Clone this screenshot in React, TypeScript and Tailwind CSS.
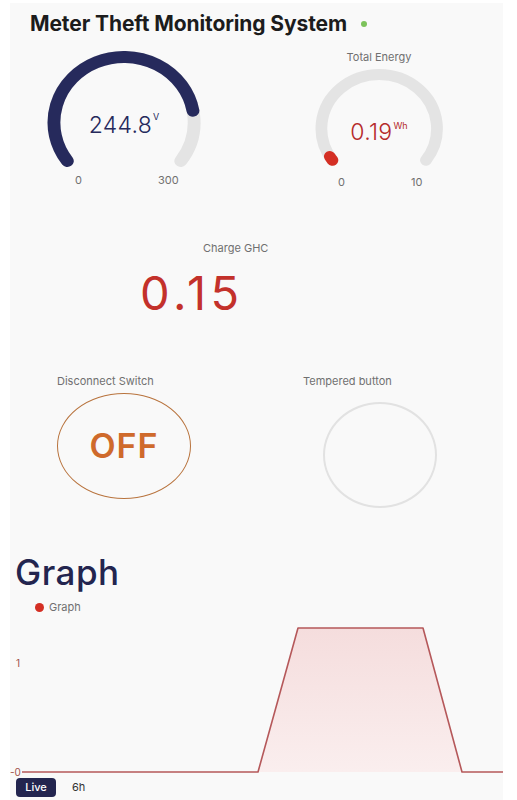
import React from "react";

// the reference is a phone capture that got widened a bit, so gauge drawings are stretched too
const STRETCH = 1.07;

function polar(cx: number, cy: number, r: number, deg: number) {
  const a = (deg * Math.PI) / 180;
  return [cx + r * Math.cos(a), cy - r * Math.sin(a)];
}

function arcPath(cx: number, cy: number, r: number, from: number, to: number) {
  const [x1, y1] = polar(cx, cy, r, from);
  const [x2, y2] = polar(cx, cy, r, to);
  const large = from - to > 180 ? 1 : 0;
  return `M ${x1.toFixed(2)} ${y1.toFixed(2)} A ${r} ${r} 0 ${large} 1 ${x2.toFixed(2)} ${y2.toFixed(2)}`;
}

const START = 216;
const SWEEP = 252;

type GaugeArcProps = {
  vbW: number;
  vbH: number;
  cx: number;
  cy: number;
  r: number;
  stroke: number;
  color: string;
  fraction: number;
};

function GaugeArc({ vbW, vbH, cx, cy, r, stroke, color, fraction }: GaugeArcProps) {
  const end = START - SWEEP * fraction;
  return (
    <svg
      width={vbW * STRETCH}
      height={vbH}
      viewBox={`0 0 ${vbW} ${vbH}`}
      preserveAspectRatio="none"
      className="block"
    >
      <path
        d={arcPath(cx, cy, r, START, START - SWEEP)}
        fill="none"
        stroke="#e4e4e4"
        strokeWidth={stroke}
        strokeLinecap="round"
      />
      <path
        d={arcPath(cx, cy, r, START, end)}
        fill="none"
        stroke={color}
        strokeWidth={stroke}
        strokeLinecap="round"
      />
    </svg>
  );
}

function VoltageGauge() {
  return (
    <div className="relative w-[154px] h-[140px] mt-[15px]">
      <GaugeArc vbW={144} vbH={124} cx={72} cy={71.5} r={65.5} stroke={12} color="#262a5c" fraction={244.8 / 300} />
      <div className="absolute left-0 right-0 top-[61px] flex justify-center text-[#262a5c]">
        <span className="text-[23px] leading-[26px] font-light tracking-[0.3px]">244.8</span>
        <span className="text-[9px] leading-[10px] ml-[1px]">V</span>
      </div>
      <span className="absolute top-[122px] left-[28px] text-[11px] leading-[14px] text-[#707070]">0</span>
      <span className="absolute top-[122px] left-[111px] text-[11px] leading-[14px] text-[#707070]">300</span>
    </div>
  );
}

function EnergyGauge() {
  return (
    <div className="flex flex-col items-center w-[128px] ml-[114px] mt-[14px]">
      <p className="text-[11px] leading-[14px] text-[#707070]">Total Energy</p>
      <div className="relative w-[128px] h-[130px] mt-[5px]">
        <GaugeArc vbW={120} vbH={110} cx={60} cy={59.5} r={54} stroke={11} color="#d42f24" fraction={0.19 / 10} />
        <div className="absolute left-0 right-0 top-[50px] flex justify-center text-[#b52b2b]">
          <span className="text-[23px] leading-[26px] font-light tracking-[0.3px]">0.19</span>
          <span className="text-[9px] leading-[10px] ml-[1px] mt-[2px]">Wh</span>
        </div>
        <span className="absolute top-[106px] left-[23px] text-[11px] leading-[14px] text-[#707070]">0</span>
        <span className="absolute top-[106px] left-[96px] text-[11px] leading-[14px] text-[#707070]">10</span>
      </div>
    </div>
  );
}

function Chart() {
  const base = 158;
  const peak = 14;
  const line = `M 12 ${base} L 248 ${base} L 288 ${peak} L 413 ${peak} L 452 ${base} L 493 ${base}`;
  const area = `M 248 ${base} L 288 ${peak} L 413 ${peak} L 452 ${base} Z`;
  return (
    <svg width={493} height={164} viewBox="0 0 493 164" className="block">
      <defs>
        <linearGradient id="fillGrad" x1="0" y1="0" x2="0" y2="1">
          <stop offset="0" stopColor="#f5dddd" />
          <stop offset="1" stopColor="#faeeee" />
        </linearGradient>
      </defs>
      <path d={area} fill="url(#fillGrad)" />
      <path d={line} fill="none" stroke="#b5585a" strokeWidth={1.6} strokeLinejoin="round" />
      <text x={6} y={53} fontSize={10} fill="#a0524a" fontFamily="Inter, sans-serif">1</text>
      <text x={0} y={162} fontSize={10} fill="#a0524a" fontFamily="Inter, sans-serif">-0</text>
    </svg>
  );
}

export default function App() {
  return (
    <div className="min-h-screen bg-white font-['Inter',sans-serif]">
      <div className="ml-[10px] pt-[3px] w-[493px]">
        <div className="h-[797px] bg-[#f9f9f9] overflow-hidden">
          <div className="flex items-center pt-[9px] pl-[20px]">
            <h1 className="text-[21px] leading-[24px] font-bold text-[#1c1c1c] tracking-[-0.1px]">
              Meter Theft Monitoring System
            </h1>
            <span className="w-[6px] h-[6px] rounded-full bg-[#7dc35b] ml-[14px]" />
          </div>

          <div className="flex h-[170px] pl-[37px]">
            <VoltageGauge />
            <EnergyGauge />
          </div>

          <p className="mt-[35px] ml-[193px] text-[11px] leading-[14px] text-[#707070]">Charge GHC</p>
          <p className="mt-[14px] ml-[130px] text-[47px] leading-[48px] text-[#c3312b] tracking-[4.5px]">0.15</p>

          <div className="flex mt-[57px]">
            <div className="ml-[47px] w-[134px]">
              <p className="text-[11px] leading-[14px] text-[#707070]">Disconnect Switch</p>
              <div className="mt-[5px] w-[134px] h-[106px] rounded-[50%] border-[1.5px] border-[#b8733d] flex items-center justify-center">
                <span className="text-[34px] leading-[36px] font-semibold text-[#cf6a2c] tracking-[1px]">OFF</span>
              </div>
            </div>
            <div className="ml-[112px]">
              <p className="text-[11px] leading-[14px] text-[#707070]">Tempered button</p>
              <div className="mt-[14px] ml-[20px] w-[114px] h-[106px] rounded-[50%] border-2 border-[#e2e2e2]" />
            </div>
          </div>

          <h2 className="mt-[44px] ml-[5px] text-[35px] leading-[40px] font-medium text-[#23254f] tracking-[0.5px]">Graph</h2>
          <div className="flex items-center mt-[8px] ml-[25px] h-[14px]">
            <span className="w-[9px] h-[9px] rounded-full bg-[#d42f24]" />
            <span className="ml-[5px] text-[11px] leading-[14px] text-[#707070]">Graph</span>
          </div>

          <Chart />

          <div className="flex items-center ml-[6px]">
            <span className="w-[40px] h-[19px] rounded-[4px] bg-[#23254f] text-white text-[11px] leading-[19px] text-center font-medium">
              Live
            </span>
            <span className="ml-[16px] text-[11px] leading-[19px] text-[#333]">6h</span>
          </div>
        </div>
      </div>
    </div>
  );
}
